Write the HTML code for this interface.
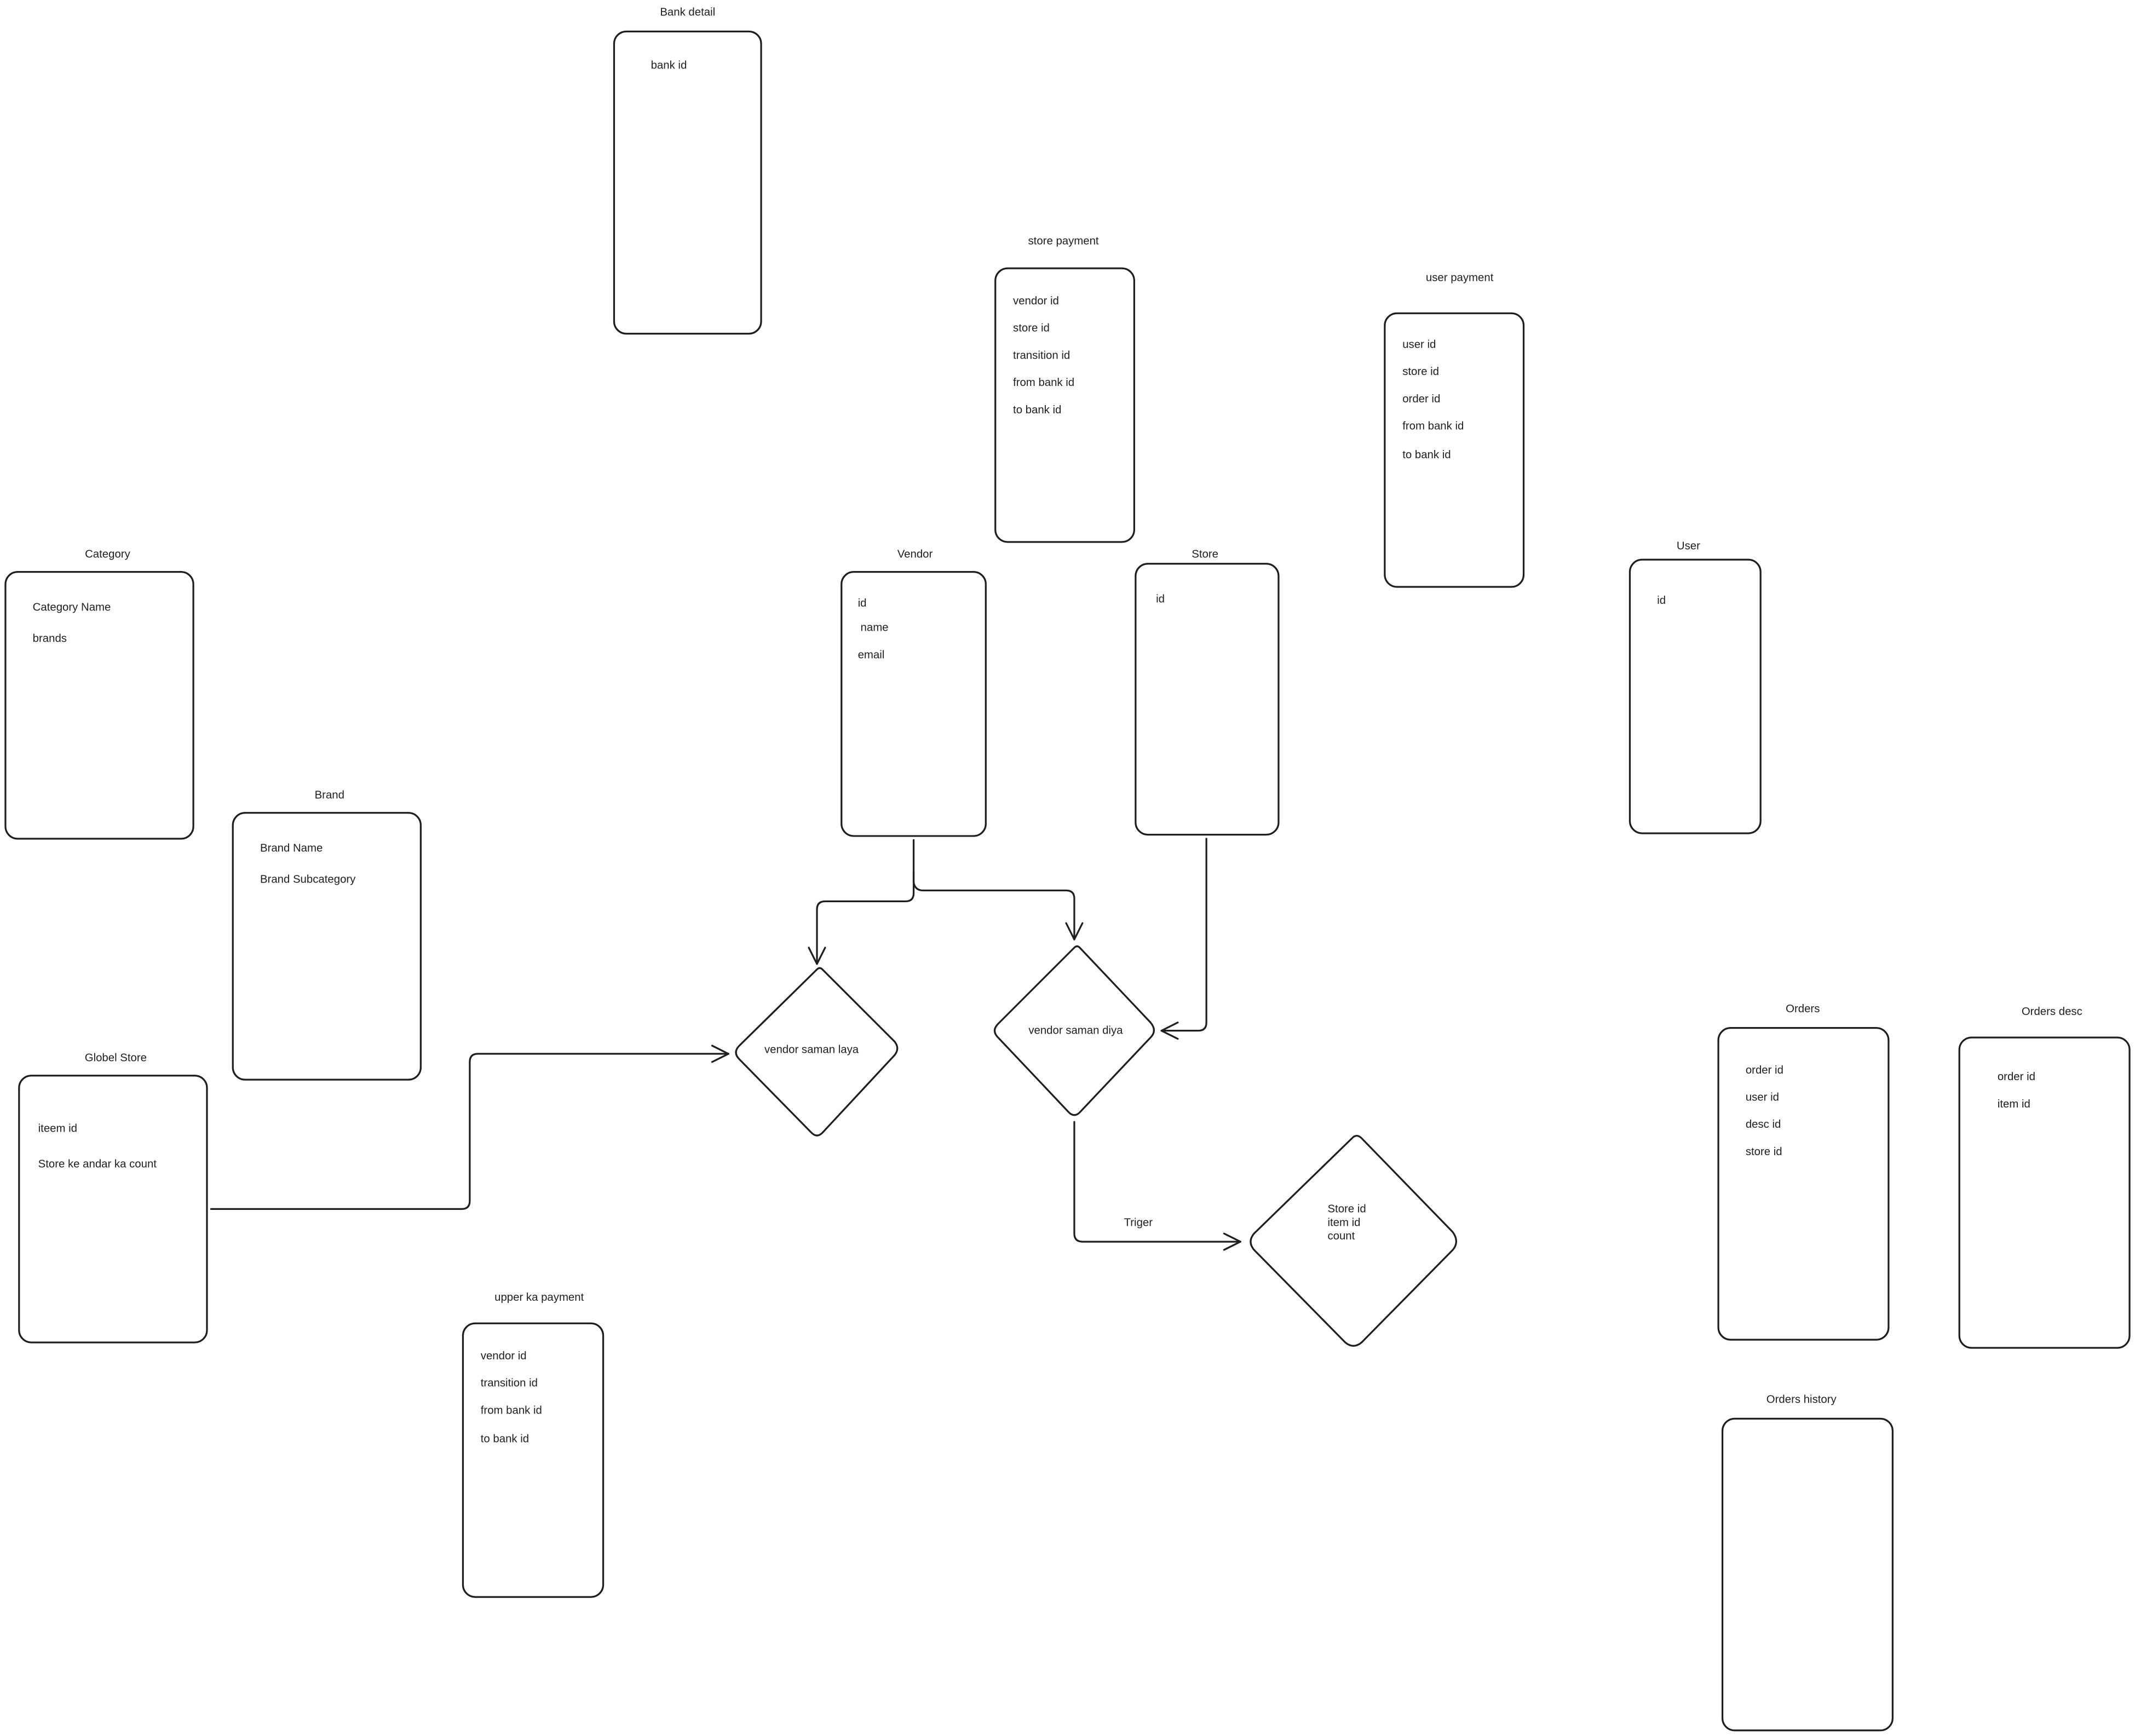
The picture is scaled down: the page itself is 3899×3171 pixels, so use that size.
<!DOCTYPE html>
<html><head><meta charset="utf-8"><style>html,body{margin:0;padding:0;background:#fff}svg{display:block}</style></head><body>
<svg width="3899" height="3171" viewBox="0 0 1568 1275" xmlns="http://www.w3.org/2000/svg">
<rect width="1568" height="1275" fill="#fff"/>
<g fill="none" stroke="#1e1e1e" stroke-width="1.3" stroke-linejoin="round" stroke-linecap="round">
<rect x="451" y="23" width="108" height="222" rx="9"/>
<rect x="731" y="197" width="102" height="201" rx="9"/>
<rect x="1017" y="230" width="102" height="201" rx="9"/>
<rect x="4" y="420" width="138" height="196" rx="9"/>
<rect x="618" y="420" width="106" height="194" rx="9"/>
<rect x="834" y="414" width="105" height="199" rx="9"/>
<rect x="1197" y="411" width="96" height="201" rx="9"/>
<rect x="171" y="597" width="138" height="196" rx="9"/>
<rect x="14" y="790" width="138" height="196" rx="9"/>
<rect x="340" y="972" width="103" height="201" rx="9"/>
<rect x="1262" y="755" width="125" height="229" rx="9"/>
<rect x="1439" y="762" width="125" height="228" rx="9"/>
<rect x="1265" y="1042" width="125" height="229" rx="9"/>
<path d="M600 712 Q602 710 604 712 L657 765 Q661 770 657 775 L604 832 Q600 836 596 832 L543 778 Q538 773 543 768 Z"/>
<path d="M789 696 Q791 694 793 696 L845 751 Q850 757 845 762 L793 817 Q789 821 785 817 L733 762 Q728 757 733 752 Z"/>
<path d="M994 835 Q997 833 1000 836 L1067 905 Q1072 912 1067 918 L1000 986 Q994 991 988 986 L921 918 Q916 912 921 906 Z"/>
<path d="M671 617 L671 656 Q671 662 665 662 L606 662 Q600 662 600 668 L600 708"/>
<path d="M594 696 L600 708 L606 696"/>
<path d="M671 640 L671 648 Q672 654 678 654 L783 654 Q789 654 789 660 L789 690"/>
<path d="M783 678 L789 690 L795 678"/>
<path d="M886 616 L886 751 Q886 757 880 757 L853 757"/>
<path d="M865 751 L853 757 L865 763"/>
<path d="M155 888 L339 888 Q345 888 345 882 L345 780 Q345 774 351 774 L535 774"/>
<path d="M523 768 L535 774 L523 780"/>
<path d="M789 824 L789 906 Q789 912 795 912 L911 912"/>
<path d="M899 906 L911 912 L899 918"/>
</g>
<g font-family="Liberation Sans, sans-serif" font-size="8.2" fill="#1e1e1e" dominant-baseline="central">
<g text-anchor="middle">
<text x="505" y="9">Bank detail</text>
<text x="781" y="177">store payment</text>
<text x="1072" y="204">user payment</text>
<text x="79" y="407">Category</text>
<text x="672" y="407">Vendor</text>
<text x="885" y="407">Store</text>
<text x="1240" y="401">User</text>
<text x="242" y="584">Brand</text>
<text x="85" y="777">Globel Store</text>
<text x="396" y="953">upper ka payment</text>
<text x="1324" y="741">Orders</text>
<text x="1507" y="743">Orders desc</text>
<text x="1323" y="1028">Orders history</text>
<text x="596" y="771">vendor saman laya</text>
<text x="790" y="757">vendor saman diya</text>
<text x="836" y="898">Triger</text>
</g>
<text x="478" y="48">bank id</text>
<text x="744" y="221">vendor id</text><text x="744" y="241">store id</text><text x="744" y="261">transition id</text><text x="744" y="281">from bank id</text><text x="744" y="301">to bank id</text>
<text x="1030" y="253">user id</text><text x="1030" y="273">store id</text><text x="1030" y="293">order id</text><text x="1030" y="313">from bank id</text><text x="1030" y="334">to bank id</text>
<text x="24" y="446">Category Name</text><text x="24" y="469">brands</text>
<text x="630" y="443">id</text><text x="632" y="461">name</text><text x="630" y="481">email</text>
<text x="849" y="440">id</text>
<text x="1217" y="441">id</text>
<text x="191" y="623">Brand Name</text><text x="191" y="646">Brand Subcategory</text>
<text x="28" y="829">iteem id</text><text x="28" y="855">Store ke andar ka count</text>
<text x="353" y="996">vendor id</text><text x="353" y="1016">transition id</text><text x="353" y="1036">from bank id</text><text x="353" y="1057">to bank id</text>
<text x="1282" y="786">order id</text><text x="1282" y="806">user id</text><text x="1282" y="826">desc id</text><text x="1282" y="846">store id</text>
<text x="1467" y="791">order id</text><text x="1467" y="811">item id</text>
<text x="975" y="888">Store id</text><text x="975" y="898">item id</text><text x="975" y="908">count</text>
</g>
</svg>
</body></html>
